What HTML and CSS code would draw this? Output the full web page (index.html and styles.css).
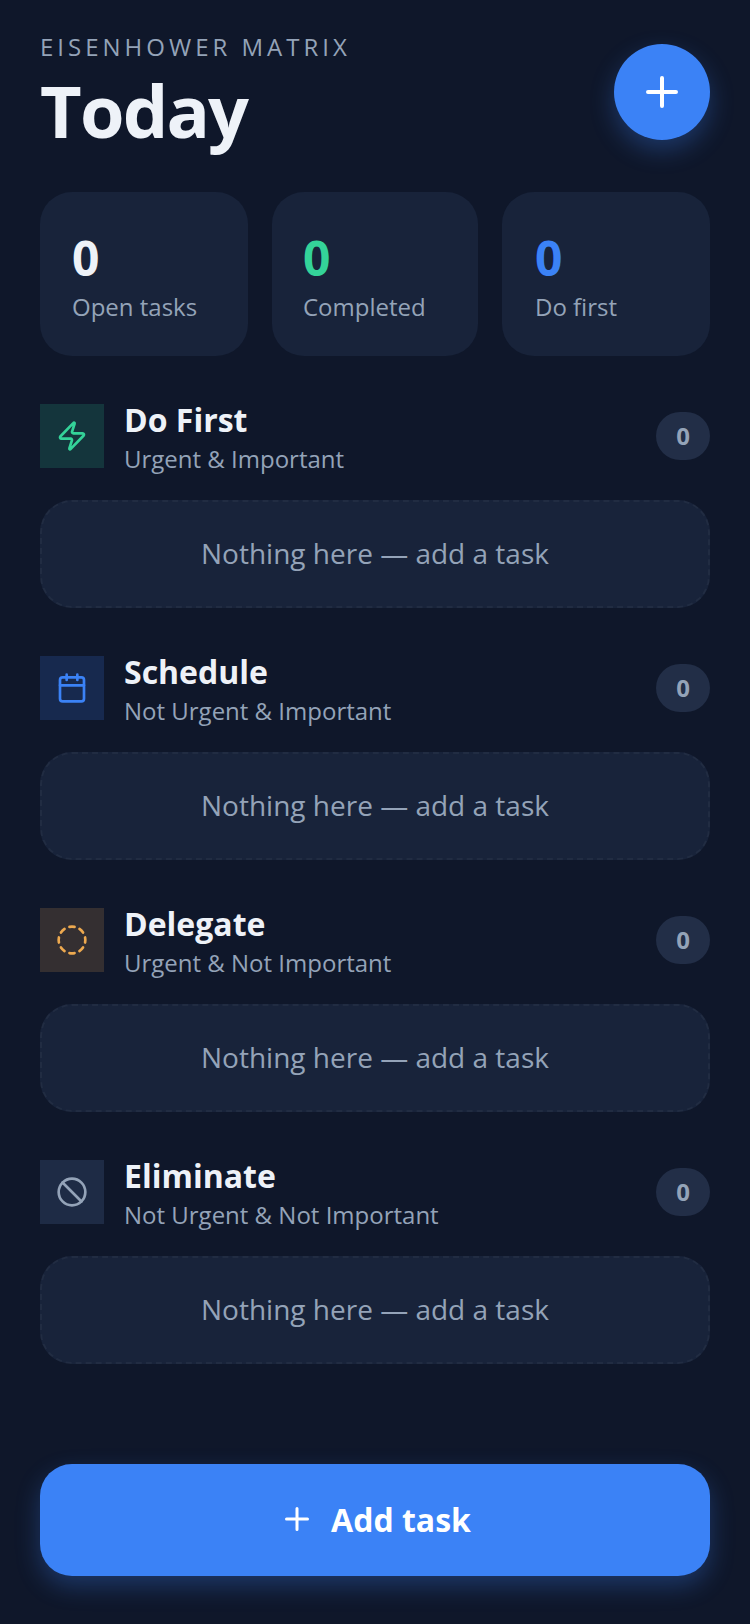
FILE: index.html
```html
<!DOCTYPE html>
<html lang="en">
<head>
<meta charset="utf-8">
<title>Today</title>
<link rel="stylesheet" href="styles.css">
</head>
<body>
<main class="app">
  <header class="header">
    <div class="heading">
      <div class="eyebrow">EISENHOWER MATRIX</div>
      <h1 class="title">Today</h1>
    </div>
    <button class="fab" aria-label="Add">
      <svg class="fab-icon" viewBox="0 0 24 24"><path d="M5 12h14M12 5v14"/></svg>
    </button>
  </header>

  <section class="stats">
    <div class="stat"><div class="stat-num">0</div><div class="stat-label">Open tasks</div></div>
    <div class="stat"><div class="stat-num green">0</div><div class="stat-label">Completed</div></div>
    <div class="stat"><div class="stat-num blue">0</div><div class="stat-label">Do first</div></div>
  </section>

  <section class="quadrant">
    <div class="q-head">
      <div class="q-icon bg-green green">
        <svg class="icon" viewBox="0 0 24 24"><path d="M4 14a1 1 0 0 1-.78-1.63l9.9-10.2a.5.5 0 0 1 .86.46l-1.92 6.02A1 1 0 0 0 13 10h7a1 1 0 0 1 .78 1.63l-9.9 10.2a.5.5 0 0 1-.86-.46l1.92-6.02A1 1 0 0 0 11 14z"/></svg>
      </div>
      <div class="q-text"><div class="q-title">Do First</div><div class="q-sub">Urgent &amp; Important</div></div>
      <div class="badge">0</div>
    </div>
    <div class="empty">Nothing here — add a task</div>
  </section>

  <section class="quadrant">
    <div class="q-head">
      <div class="q-icon bg-blue blue">
        <svg class="icon" viewBox="0 0 24 24"><path d="M8 2v4M16 2v4M3 10h18"/><rect x="3" y="4" width="18" height="18" rx="2"/></svg>
      </div>
      <div class="q-text"><div class="q-title">Schedule</div><div class="q-sub">Not Urgent &amp; Important</div></div>
      <div class="badge">0</div>
    </div>
    <div class="empty">Nothing here — add a task</div>
  </section>

  <section class="quadrant">
    <div class="q-head">
      <div class="q-icon bg-amber amber">
        <svg class="icon" viewBox="0 0 24 24"><path d="M10.1 2.182a10 10 0 0 1 3.8 0M13.9 21.818a10 10 0 0 1-3.8 0M17.609 3.721a10 10 0 0 1 2.69 2.7M2.182 13.9a10 10 0 0 1 0-3.8M20.279 17.609a10 10 0 0 1-2.7 2.69M21.818 10.1a10 10 0 0 1 0 3.8M3.721 6.391a10 10 0 0 1 2.7-2.69M6.391 20.279a10 10 0 0 1-2.69-2.7"/></svg>
      </div>
      <div class="q-text"><div class="q-title">Delegate</div><div class="q-sub">Urgent &amp; Not Important</div></div>
      <div class="badge">0</div>
    </div>
    <div class="empty">Nothing here — add a task</div>
  </section>

  <section class="quadrant">
    <div class="q-head">
      <div class="q-icon bg-slate slate">
        <svg class="icon" viewBox="0 0 24 24"><circle cx="12" cy="12" r="10"/><path d="m4.9 4.9 14.2 14.2"/></svg>
      </div>
      <div class="q-text"><div class="q-title">Eliminate</div><div class="q-sub">Not Urgent &amp; Not Important</div></div>
      <div class="badge">0</div>
    </div>
    <div class="empty">Nothing here — add a task</div>
  </section>

  <button class="add">
    <svg class="add-icon" viewBox="0 0 24 24"><path d="M5 12h14M12 5v14"/></svg>
    <span>Add task</span>
  </button>
</main>
</body>
</html>
```
FILE: styles.css
```css
* { box-sizing: border-box; }
html, body { margin: 0; padding: 0; }
body {
  background: #0f172a;
  color: #eef2f8;
  font-family: "Open Sans", "Noto Sans", sans-serif;
}
button { font-family: inherit; border: 0; padding: 0; }
.app {
  display: flex;
  flex-direction: column;
  min-height: 1624px;
  padding: 32px 40px 48px;
}
.header {
  display: flex;
  justify-content: space-between;
  align-items: flex-start;
  margin-bottom: 35px;
}
.eyebrow {
  font-size: 24px;
  line-height: 30px;
  letter-spacing: 4px;
  color: #94a3b8;
}
.title {
  margin: 1px 0 0;
  font-size: 72px;
  line-height: 94px;
  font-weight: 700;
  letter-spacing: -1.8px;
}
.fab {
  width: 96px;
  height: 96px;
  margin-top: 12px;
  border-radius: 50%;
  background: #3b82f6;
  display: flex;
  align-items: center;
  justify-content: center;
  box-shadow: 0 10px 24px rgba(59, 130, 246, 0.3);
}
.fab-icon { width: 48px; height: 48px; fill: none; stroke: #fff; stroke-width: 2; stroke-linecap: round; }
.stats {
  display: grid;
  grid-template-columns: 104fr 103fr 104fr;
  gap: 24px;
  margin-bottom: 48px;
}
.stat {
  height: 164px;
  padding: 34px 32px 0;
  background: #18233a;
  border-radius: 32px;
}
.stat:nth-child(2) { padding-left: 31px; }
.stat:nth-child(3) { padding-left: 33px; }
.stat-num { font-size: 48px; line-height: 63px; font-weight: 700; }
.stat-label { font-size: 24px; line-height: 36px; color: #94a3b8; }
.green { color: #34d399; }
.blue { color: #3b82f6; }
.amber { color: #eda94f; }
.slate { color: #94a3b8; }
.quadrant { margin-bottom: 48px; }
.q-head { display: flex; align-items: flex-start; gap: 20px; margin-bottom: 20px; }
.q-icon {
  width: 64px;
  height: 64px;
  flex: none;
  display: flex;
  align-items: center;
  justify-content: center;
}
.bg-green { background: rgba(52, 211, 153, 0.16); }
.bg-blue { background: rgba(59, 130, 246, 0.18); }
.bg-amber { background: rgba(246, 173, 85, 0.16); }
.bg-slate { background: #1e2b45; }
.icon { width: 32px; height: 32px; fill: none; stroke: currentColor; stroke-width: 2; stroke-linecap: round; stroke-linejoin: round; }
.q-text { flex: 1; }
.q-title { font-size: 32px; line-height: 32px; font-weight: 700; }
.q-sub { margin-top: 2px; font-size: 24px; line-height: 42px; color: #94a3b8; }
.badge {
  width: 54px;
  height: 48px;
  margin-top: 8px;
  padding-bottom: 2px;
  border-radius: 24px;
  background: #222e47;
  color: #94a3b8;
  font-size: 24px;
  font-weight: 700;
  display: flex;
  align-items: center;
  justify-content: center;
}
.empty {
  height: 108px;
  padding-bottom: 2px;
  display: flex;
  align-items: center;
  justify-content: center;
  background: #18233a;
  border: 2px dashed #212c42;
  border-radius: 32px;
  font-size: 28px;
  color: #94a3b8;
}
.add {
  margin-top: auto;
  height: 112px;
  padding-bottom: 2px;
  border-radius: 32px;
  background: #3b82f6;
  color: #fff;
  font-size: 32px;
  font-weight: 700;
  display: flex;
  align-items: center;
  justify-content: center;
  gap: 16px;
  box-shadow: 0 10px 24px rgba(59, 130, 246, 0.3);
}
.add-icon { width: 36px; height: 36px; fill: none; stroke: #fff; stroke-width: 2; stroke-linecap: round; }
```
